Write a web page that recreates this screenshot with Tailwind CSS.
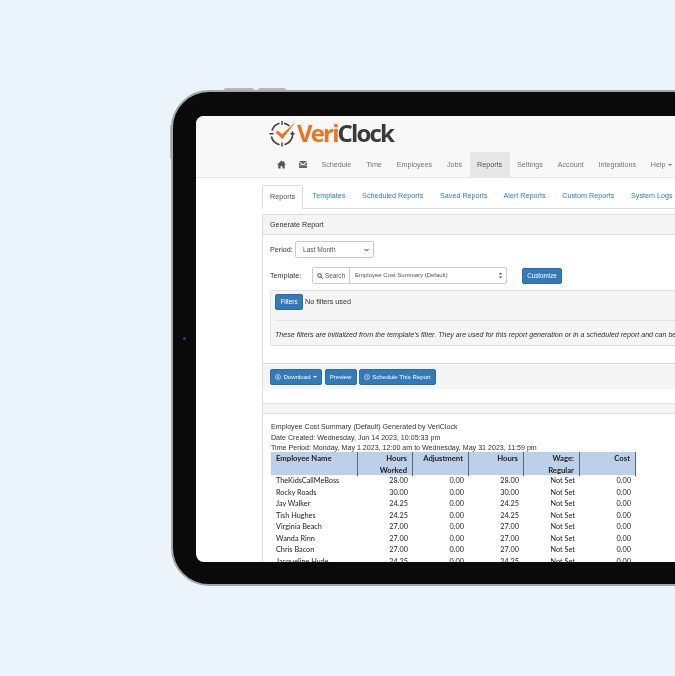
<!DOCTYPE html>
<html><head><meta charset="utf-8"><script src="https://cdn.jsdelivr.net/npm/@tailwindcss/browser@4"></script></head>
<body class="m-0">
<div class="w-[675px] h-[676px] overflow-hidden bg-[#ebf3fb] pt-[90px] pl-[171px] font-['Liberation_Sans',sans-serif] text-[7.2px] text-[#333]">
 <div class="relative w-[640px] h-[496px] rounded-l-[38px] bg-[#0a0a0a] border-2 border-[#a2a7ac] pl-[23px] pt-[24px]">
  <div class="absolute left-[51px] top-[-4px] w-[30px] h-[2px] rounded-t-sm bg-[#b4b9be]"></div>
  <div class="absolute left-[85px] top-[-4px] w-[28px] h-[2px] rounded-t-sm bg-[#b4b9be]"></div>
  <div class="absolute left-[-3px] top-[33px] w-[1px] h-[34px] bg-[#b4b9be]"></div>
  <div class="absolute left-[10px] top-[245px] w-[3px] h-[3px] rounded-full bg-[#24408a]"></div>

  <div class="w-[600px] h-[446px] overflow-hidden rounded-l-[8px] bg-white blur-[0.35px]">
   <!-- navbar -->
   <div class="h-[62px] bg-[#f8f8f8] border-b border-[#e7e7e7] pl-[73px]">
    <div class="h-[36px] flex items-start">
     <svg class="w-[26px] h-[28px] mt-[4px] shrink-0" viewBox="0 0 26 28" fill="none">
      <g stroke="#3f3f3f" stroke-width="1.6">
       <path d="M3 10.5A11 11 0 0 1 10.5 3.2"/><path d="M15 3.2A11 11 0 0 1 20.5 6"/><path d="M23.3 11.5A11 11 0 0 1 15.5 24.7"/><path d="M10.5 24.7A11 11 0 0 1 2.4 16.5"/>
       <path d="M13 1V5M13 22.5V26.5M0.5 13.7H4.5M21.5 13.7H25.5" stroke-width="1.4"/>
      </g>
      <path d="M6.5 12.5L13.5 19L27 1.5L13 14.2L9 10.8Z" fill="#ee7326"/>
     </svg>
     <div class="ml-[2px] mt-[3px] text-[24px] leading-[28px] font-bold tracking-[-1.85px] whitespace-nowrap font-['Open_Sans',sans-serif]"><span class="text-[#ee7326]">Veri</span><span class="text-[#3a3a3a]">Clock</span></div>
    </div>
    <div class="flex h-[26px] items-center text-[#777] whitespace-nowrap ml-[2px]">
     <div class="w-[21px] h-full flex items-center justify-center">
      <svg class="w-[9px] h-[9px] -mt-[1px]" viewBox="0 0 16 16" fill="#555"><path d="M8 1L0 8.5h2.3V15h4v-4.5h3.4V15h4V8.5H16L13 5.7V2h-2v1.9z"/></svg>
     </div>
     <div class="w-[22px] h-full flex items-center justify-center">
      <svg class="w-[8px] h-[7px] -mt-[1px]" viewBox="0 0 16 14" fill="#666"><path d="M0 0h16L8 6.5z"/><path d="M0 2.5L4.5 6 0 10zM16 2.5L11.5 6l4.5 4zM0 12V11l5.5-4L8 9l2.5-2L16 11v3H0z"/></svg>
     </div>
     <div class="px-[7.4px]">Schedule</div>
     <div class="px-[7.4px]">Time</div>
     <div class="px-[7.4px]">Employees</div>
     <div class="px-[7.4px]">Jobs</div>
     <div class="px-[7.4px] h-full flex items-center bg-[#e7e7e7] text-[#555]">Reports</div>
     <div class="px-[7.4px]">Settings</div>
     <div class="px-[7.4px]">Account</div>
     <div class="px-[7.4px]">Integrations</div>
     <div class="px-[7.4px] flex items-center gap-[2px]">Help <span class="w-0 h-0 border-x-[2px] border-x-transparent border-t-[2px] border-t-[#777]"></span></div>
    </div>
   </div>

   <!-- content -->
   <div class="pl-[66px] pt-[7px]">
    <!-- tabs -->
    <div class="flex h-[24px] border-b border-[#ddd] text-[#337ab7] whitespace-nowrap">
     <div class="h-[24px] px-[7px] flex items-center text-[#555] bg-white border border-[#ddd] border-b-white rounded-t-[2px]">Reports</div>
     <div class="pl-[9.4px] pr-[8.4px] flex items-center">Templates</div>
     <div class="px-[8.4px] flex items-center">Scheduled Reports</div>
     <div class="px-[8.4px] flex items-center">Saved Reports</div>
     <div class="pl-[7.6px] pr-[8.4px] flex items-center">Alert Reports</div>
     <div class="px-[8.4px] flex items-center">Custom Reports</div>
     <div class="px-[8.4px] flex items-center">System Logs</div>
    </div>
    <!-- panel -->
    <div class="mt-[5px] border border-[#ddd] rounded-tl-[2px] h-[400px] whitespace-nowrap">
     <div class="h-[20px] bg-[#f5f5f5] border-b border-[#ddd] pl-[7px] pt-[1px] flex items-center">Generate Report</div>
     <div class="pl-[7px] pt-[6px]">
      <div class="flex items-center h-[17px]">
       <span class="w-[25px] pt-[1px]">Period:</span>
       <div class="w-[79px] h-[17px] border border-[#ccc] rounded-[2px] bg-white pl-[7px] pr-[4px] flex items-center justify-between text-[6.6px] text-[#555]">Last Month
        <svg class="w-[5px] h-[4px]" viewBox="0 0 10 8" fill="none" stroke="#333" stroke-width="2"><path d="M1 2l4 4 4-4"/></svg></div>
      </div>
      <div class="flex items-center h-[17px] mt-[9px]">
       <span class="w-[42px] pt-[1px]">Template:</span>
       <div class="w-[195px] h-[17px] flex border border-[#ccc] rounded-[2px] text-[6.3px] text-[#555]">
        <div class="w-[37px] shrink-0 bg-white border-r border-[#ccc] flex items-center justify-center gap-[2px]">
         <svg class="w-[6px] h-[6px]" viewBox="0 0 12 12" fill="none" stroke="#333" stroke-width="1.8"><circle cx="5" cy="5" r="3.6"/><path d="M8 8l3.4 3.4"/></svg>Search</div>
        <div class="grow pl-[5px] pr-[4px] flex items-center justify-between text-[6px]">Employee Cost Summary (Default)
         <svg class="w-[3px] h-[7px]" viewBox="0 0 6 14" fill="#444"><path d="M3 1l3 4H0zM3 13l3-4H0z"/></svg></div>
       </div>
       <div class="ml-[15px] w-[40px] h-[16px] bg-[#337ab7] border border-[#2e6da4] rounded-[2px] text-white text-[6.3px] flex items-center justify-center">Customize</div>
      </div>
      <!-- well -->
      <div class="mt-[6px] w-[500px] h-[56px] bg-[#f5f5f5] border border-[#e3e3e3] rounded-[2px] pl-[4px] pt-[3px]">
       <div class="flex items-center h-[16px]">
        <div class="w-[28px] h-[16px] bg-[#337ab7] border border-[#2e6da4] rounded-[2px] text-white text-[6.3px] flex items-center justify-center">Filters</div>
        <span class="ml-[2px]">No filters used</span>
       </div>
       <div class="mt-[10px] border-t border-[#e3e3e3]"></div>
       <div class="mt-[9px] italic text-[7.1px] leading-[10px]">These filters are initialized from the template's filter. They are used for this report generation or in a scheduled report and can be overridden.</div>
      </div>
     </div>
     <!-- footer bar -->
     <div class="mt-[17px] h-[26px] bg-[#f5f5f5] border-t border-[#ddd] pl-[7px] flex items-center gap-[2.5px] text-white text-[6.1px]">
      <div class="w-[52px] h-[16px] bg-[#337ab7] border border-[#2e6da4] rounded-[2px] flex items-center justify-center gap-[2px]">
       <svg class="w-[6px] h-[6px]" viewBox="0 0 12 12" fill="none" stroke="#fff" stroke-width="1.2"><circle cx="6" cy="6" r="5"/><path d="M6 3v5M4 6.2l2 2 2-2"/></svg>Download <span class="w-0 h-0 border-x-[2px] border-x-transparent border-t-[2px] border-t-white"></span></div>
      <div class="w-[32px] h-[16px] bg-[#337ab7] border border-[#2e6da4] rounded-[2px] flex items-center justify-center">Preview</div>
      <div class="w-[77px] h-[16px] bg-[#337ab7] border border-[#2e6da4] rounded-[2px] flex items-center justify-center gap-[2px]">
       <svg class="w-[6px] h-[6px]" viewBox="0 0 12 12" fill="none" stroke="#fff" stroke-width="1.2"><circle cx="6" cy="6" r="5"/><path d="M6 3v3.4l2.2 1.2"/></svg>Schedule This Report</div>
     </div>
     <div class="mt-[14px] h-[11px] bg-[#f5f5f5] border-y border-[#e3e3e3]"></div>
     <!-- report -->
     <div class="pl-[8px] pt-[8px] text-[7.1px] leading-[10.5px] text-[#333]">
      <div>Employee Cost Summary (Default) Generated by VeriClock</div>
      <div>Date Created: Wednesday, Jun 14 2023, 10:05:33 pm</div>
      <div>Time Period: Monday, May 1 2023, 12:00 am to Wednesday, May 31 2023, 11:59 pm</div>
     </div>
     <div class="ml-[8px] -mt-[2px] w-[365px] font-['Lato',sans-serif] text-[7.3px] text-[#222]">
      <div class="grid grid-cols-[87px_55px_56px_55px_56px_56px] h-[23px] bg-[#bdd0e9] font-bold text-[7.7px] leading-[12px]">
       <div class="pl-[5px] border-r border-[#55677f]">Employee Name</div>
       <div class="pr-[5px] text-right border-r border-[#55677f]">Hours<br>Worked</div>
       <div class="pr-[5px] text-right border-r border-[#55677f]">Adjustment</div>
       <div class="pr-[5px] text-right border-r border-[#55677f]">Hours</div>
       <div class="pr-[5px] text-right border-r border-[#55677f]">Wage:<br>Regular</div>
       <div class="pr-[5px] text-right border-r border-[#55677f]">Cost</div>
      </div>
      <div class="grid grid-cols-[87px_55px_56px_55px_56px_56px] auto-rows-[11.5px] leading-[11.5px] mt-[0.5px] [&>div:not(:nth-child(6n+1))]:text-right [&>div:not(:nth-child(6n+1))]:pr-[5px] [&>div:nth-child(6n+1)]:pl-[5px]">
       <div>TheKidsCallMeBoss</div><div>28.00</div><div>0.00</div><div>28.00</div><div>Not Set</div><div>0.00</div>
       <div>Rocky Roads</div><div>30.00</div><div>0.00</div><div>30.00</div><div>Not Set</div><div>0.00</div>
       <div>Jay Walker</div><div>24.25</div><div>0.00</div><div>24.25</div><div>Not Set</div><div>0.00</div>
       <div>Tish Hughes</div><div>24.25</div><div>0.00</div><div>24.25</div><div>Not Set</div><div>0.00</div>
       <div>Virginia Beach</div><div>27.00</div><div>0.00</div><div>27.00</div><div>Not Set</div><div>0.00</div>
       <div>Wanda Rinn</div><div>27.00</div><div>0.00</div><div>27.00</div><div>Not Set</div><div>0.00</div>
       <div>Chris Bacon</div><div>27.00</div><div>0.00</div><div>27.00</div><div>Not Set</div><div>0.00</div>
       <div>Jacqueline Hyde</div><div>24.25</div><div>0.00</div><div>24.25</div><div>Not Set</div><div>0.00</div>
      </div>
     </div>
    </div>
   </div>
  </div>
 </div>
</div>
</body></html>
